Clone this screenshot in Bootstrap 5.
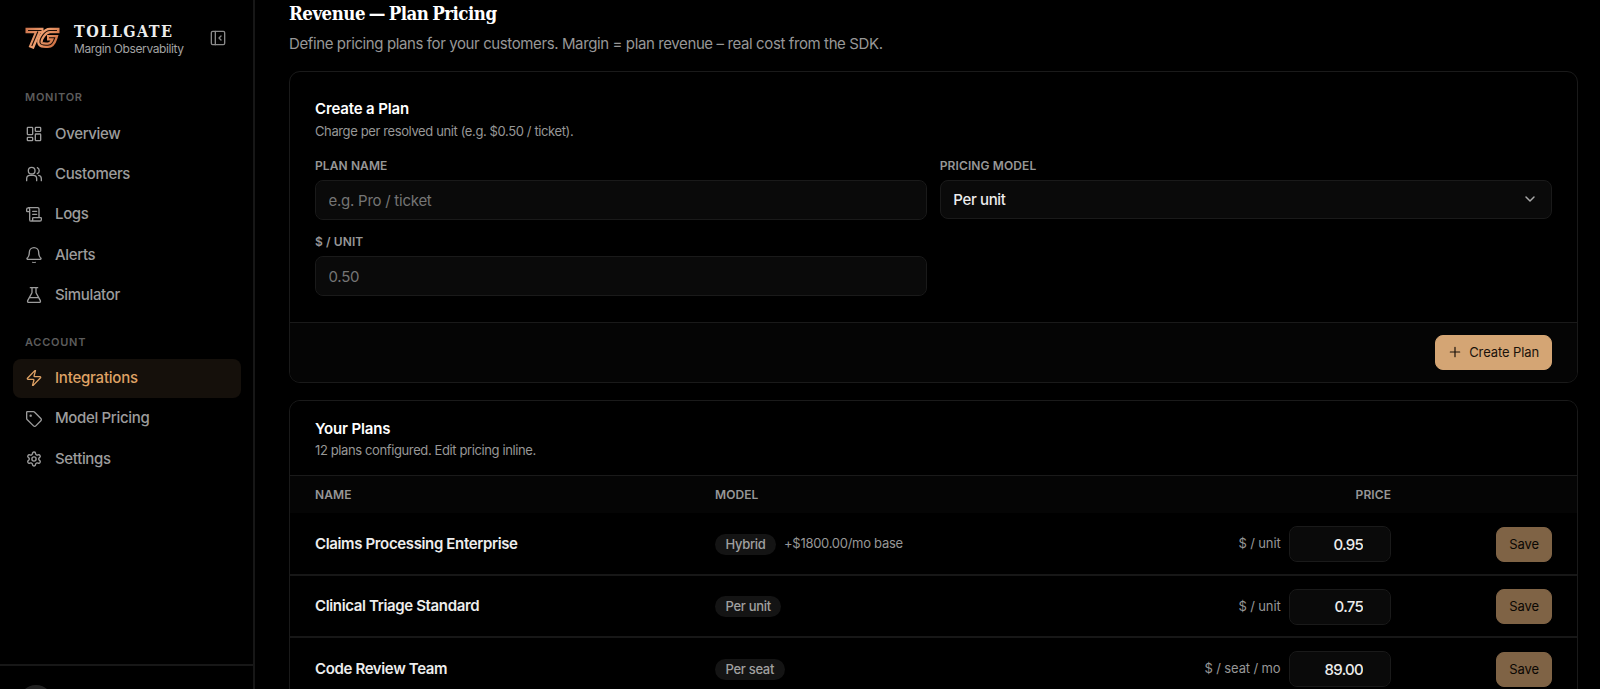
<!DOCTYPE html>
<html lang="en" data-bs-theme="dark">
<head>
<meta charset="utf-8">
<meta name="viewport" content="width=device-width, initial-scale=1">
<title>Tollgate – Plan Pricing</title>
<link href="https://cdn.jsdelivr.net/npm/bootstrap@5.3.0/dist/css/bootstrap.min.css" rel="stylesheet">
<script src="https://cdn.jsdelivr.net/npm/bootstrap@5.3.0/dist/js/bootstrap.bundle.min.js" defer></script>
<style>
:root{--line:#1a1a1a;--muted:#979797;--accent:#d4a574;--field:#0a0a0a}
body{background:#000;color:#ededed;font:15px/1.5 Inter,"Liberation Sans",sans-serif;height:100vh;overflow:hidden}
svg.ico{width:16px;height:16px;fill:none;stroke:currentColor;stroke-width:2;stroke-linecap:round;stroke-linejoin:round;flex:none}
.sidebar{width:255px;flex:none;border-right:2px solid #171717}
.brand-row{height:56px;padding:20px 27px 0 25px}
.brand-text{padding-left:14px}
.brand-name{font:700 16px/20px "DejaVu Serif Condensed","DejaVu Serif",serif;letter-spacing:1.46px;padding-top:1px}
.tagline{font-size:12px;line-height:14px;letter-spacing:-.4px;color:#a3a3a3}
.collapse-ico{color:#8a8a8a}
.side-label{font-size:11px;font-weight:600;line-height:16px;letter-spacing:.75px;color:#5c5c5c;padding-left:25px}
.side-label.first{margin-top:33px}
.side-label.next{margin-top:19.5px}
.side-nav{padding:10px 12px 0 13px;gap:2px}
.side-nav.account{padding-top:9.3px}
.side-nav .nav-link{height:38.3px;padding:0 12.5px;gap:13.5px;border-radius:8px;color:#9c9c9c;font-weight:500;letter-spacing:-.34px}
.side-nav .nav-link.active{background:#15100b;color:#dfa265;letter-spacing:-.22px}
.side-foot{height:25px;border-top:2px solid #171717;padding:19px 0 0 19px;overflow:hidden}
.avatar{width:34px;height:34px;background:#222}
.content{padding:0 22px 0 34px;min-width:0}
h1{font:700 18.5px/27px "DejaVu Serif Condensed","DejaVu Serif",serif;letter-spacing:-.5px;word-spacing:-1.5px;margin:0 0 6px}
.intro{line-height:22px;letter-spacing:-.39px;color:var(--muted);margin-bottom:16px}
.panel{--bs-card-bg:#000;--bs-card-border-color:var(--line);--bs-card-border-radius:11px;--bs-card-inner-border-radius:10px;--bs-card-cap-bg:#050505}
.panel + .panel{margin-top:17px}
.panel h2{font-size:15px;font-weight:600;letter-spacing:-.15px;line-height:24px;margin:0}
.panel .card-body{padding:25px 25px 26px}
.panel .card-footer{padding:12px 25px}
.panel .card-header{padding:16px 25px 15px;background:#000}
.panel .card-header h2{line-height:23px}
.hint{font-size:13px;line-height:20px;letter-spacing:-.385px;color:var(--muted)}
.plan-form{--bs-gutter-x:12.5px;--bs-gutter-y:12.5px;margin-top:3px}
.cap{font-size:12px;font-weight:600;line-height:18px;letter-spacing:.1px;color:var(--muted)}
label.cap{margin-bottom:5px}
.form-control,.form-select{background-color:var(--field);border-color:var(--line);border-radius:8px;font-size:15px;color:#ededed}
.field-lg{height:40.5px;padding:1px 12.5px 0;letter-spacing:-.25px}
.field-lg::placeholder{color:#757575;opacity:1}
.form-select.field-lg{height:39px;padding-top:2px;font-weight:500;letter-spacing:-.36px;background-size:16px;background-position:right 13px center;
 background-image:url("data:image/svg+xml,%3Csvg xmlns='http://www.w3.org/2000/svg' viewBox='0 0 24 24' fill='none' stroke='%23aaa' stroke-width='2.2' stroke-linecap='round' stroke-linejoin='round'%3E%3Cpath d='m6 9 6 6 6-6'/%3E%3C/svg%3E")}
.btn-gold{--bs-btn-bg:var(--accent);--bs-btn-color:#1a120a;--bs-btn-border-color:var(--accent);--bs-btn-disabled-bg:var(--accent);--bs-btn-disabled-color:#120c05;--bs-btn-disabled-border-color:var(--accent);--bs-btn-disabled-opacity:.6;--bs-btn-border-radius:8px;font-size:13px;font-weight:400;line-height:20px;height:35px;padding:0 12px 1px;letter-spacing:-.1px}
.btn-create{gap:6px;padding-left:11px}
.btn-gold svg.ico{stroke-width:1.8}
.btn-save{width:56px;padding:0 0 1px}
.plans{--bs-table-bg:transparent;--bs-table-color:#ededed;color:#ededed;table-layout:fixed}
.plans th,.plans td{border:0;padding:0 24px 0 25px;vertical-align:middle;white-space:nowrap}
.plans th:nth-child(2),.plans td:nth-child(2){padding-left:24px}
.plans td{padding-top:1px}
.plans td:last-child{padding-right:25px}
.plans thead tr{height:37px;background:#050505}
.plans tbody tr{height:62px}
.plans tbody tr+tr{border-top:2px solid #171717}
.col-name{width:401px}.col-price{width:360px}.col-save{width:162px}
.plan-title{font-weight:600;letter-spacing:-.36px}
.model-pill{background:#141414;color:#a0a0a0;font-size:13px;font-weight:500;letter-spacing:-.3px;padding:0 10.5px;line-height:21px}
.unit-text{font-size:13px;letter-spacing:-.12px;color:var(--muted)}
.base-fee{letter-spacing:-.28px}
.price-box{width:102.5px;height:36px;text-align:right;padding:0 27px 0 12px;font-weight:500;letter-spacing:-.7px}
</style>
</head>
<body class="d-flex">
<aside class="sidebar vh-100 d-flex flex-column">
  <div class="brand-row d-flex align-items-center">
    <svg width="35" height="22" viewBox="0 0 35 22" fill="none">
      <defs><linearGradient id="g" gradientUnits="userSpaceOnUse" x1="0" y1="0" x2="30" y2="22"><stop stop-color="#c9704a"/><stop offset=".5" stop-color="#f0a070"/><stop offset="1" stop-color="#c8683c"/></linearGradient></defs>
      <g stroke="url(#g)" stroke-width="5.6"><path d="M0.500 3.500H18.500M13.300 4 6.200 21"/><path d="M34.500 3.500H25C19.500 3.500 14.500 12 15 15.500C15.500 18.200 18 18.200 21 18.200H23C27 18.200 28.700 14 29.700 10.800H22"/></g>
      <g stroke="#1c0d06" stroke-width="1.100"><path d="M3 3.500H16.500M12.900 4.500 6.800 19"/><path d="M32 3.500H25C19.500 3.500 14.500 12 15 15.500C15.500 18.200 18 18.200 21 18.200H23C27 18.200 28.700 14 29.700 10.800H24"/></g>
    </svg>
    <div class="brand-text flex-grow-1 text-nowrap"><div class="brand-name">TOLLGATE</div><div class="tagline">Margin Observability</div></div>
    <svg class="ico collapse-ico" viewBox="0 0 24 24"><rect x="2" y="2" width="20" height="20" rx="2"/><path d="M8 2v20M16.500 9l-3 3 3 3"/></svg>
  </div>
  <div class="side-label first">MONITOR</div>
  <nav class="side-nav nav flex-column flex-nowrap">
    <a class="nav-link d-flex align-items-center" href="#"><svg class="ico" viewBox="0 0 24 24"><rect x="2" y="2" width="8" height="11" rx="1"/><rect x="14" y="2" width="8" height="6" rx="1"/><rect x="14" y="12" width="8" height="10" rx="1"/><rect x="2" y="17" width="8" height="5" rx="1"/></svg>Overview</a>
    <a class="nav-link d-flex align-items-center" href="#"><svg class="ico" viewBox="0 0 24 24"><path d="M16 22v-3a5 5 0 0 0-5-5H6a5 5 0 0 0-5 5v3M17 2.500a5 5 0 0 1 0 9M23 22v-3a5 5 0 0 0-4-4.800"/><circle cx="8.500" cy="7" r="5"/></svg>Customers</a>
    <a class="nav-link d-flex align-items-center" href="#"><svg class="ico" viewBox="0 0 24 24"><path d="M16 11h-6M16 6.500h-6M19.500 16V3a2 2 0 0 0-2-2H3.500M8 21h13a2 2 0 0 0 2-2v-2a1 1 0 0 0-1-1H11a1 1 0 0 0-1 1v2a2 2 0 1 1-4.500 0V3.500a2 2 0 1 0-4.500 0V6a1 1 0 0 0 1 1h3.500"/></svg>Logs</a>
    <a class="nav-link d-flex align-items-center" href="#"><svg class="ico" viewBox="0 0 24 24"><path d="M10.300 23a2 2 0 0 0 3.400 0M2.300 16.300A1 1 0 0 0 3 18.500h18a1 1 0 0 0 .7-2.200C20.400 15 19 13 19 8A7 7 0 0 0 5 8c0 5-1.400 7-2.700 8.300z"/></svg>Alerts</a>
    <a class="nav-link d-flex align-items-center" href="#"><svg class="ico" viewBox="0 0 24 24"><path d="M15 1v7a2 2 0 0 0 .25 1L21.500 20.500A1.700 1.700 0 0 1 20 23H4a1.700 1.700 0 0 1-1.500-2.500L8.750 9A2 2 0 0 0 9 8V1M6.500 1h11M6 16h12"/></svg>Simulator</a>
  </nav>
  <div class="side-label next">ACCOUNT</div>
  <nav class="side-nav account nav flex-column flex-nowrap">
    <a class="nav-link active d-flex align-items-center" href="#"><svg class="ico" viewBox="0 0 24 24"><path d="M3 14a1 1 0 0 1-.8-1.600l11-11.500a.5.5 0 0 1 .9.500l-2 7.600A1 1 0 0 0 13 10h8a1 1 0 0 1 .8 1.600l-11 11.500a.5.5 0 0 1-.9-.5l2-7.600A1 1 0 0 0 11 14z"/></svg>Integrations</a>
    <a class="nav-link d-flex align-items-center" href="#"><svg class="ico" viewBox="0 0 24 24"><path d="M12.600 1.600A2 2 0 0 0 11.200 1H2a1 1 0 0 0-1 1v9.200a2 2 0 0 0 .6 1.400l9.700 9.700a2.400 2.400 0 0 0 3.400 0l7.600-7.600a2.400 2.400 0 0 0 0-3.400z"/><circle cx="7" cy="7" r=".8" fill="currentColor"/></svg>Model Pricing</a>
    <a class="nav-link d-flex align-items-center" href="#"><svg class="ico" viewBox="0.500 0.500 23 23"><path d="M12.200 2h-.4a2 2 0 0 0-2 2v.2a2 2 0 0 1-1 1.700l-.4.300a2 2 0 0 1-2 0l-.2-.1a2 2 0 0 0-2.700.7l-.2.400a2 2 0 0 0 .7 2.700l.2.100a2 2 0 0 1 1 1.700v.5a2 2 0 0 1-1 1.800l-.2.100a2 2 0 0 0-.7 2.700l.2.400a2 2 0 0 0 2.700.7l.2-.1a2 2 0 0 1 2 0l.4.300a2 2 0 0 1 1 1.700v.2a2 2 0 0 0 2 2h.4a2 2 0 0 0 2-2v-.2a2 2 0 0 1 1-1.700l.4-.3a2 2 0 0 1 2 0l.2.100a2 2 0 0 0 2.700-.7l.2-.4a2 2 0 0 0-.7-2.700l-.2-.1a2 2 0 0 1-1-1.800v-.5a2 2 0 0 1 1-1.700l.2-.1a2 2 0 0 0 .7-2.700l-.2-.4a2 2 0 0 0-2.700-.7l-.2.100a2 2 0 0 1-2 0l-.4-.3a2 2 0 0 1-1-1.700V4a2 2 0 0 0-2-2z"/><circle cx="12" cy="12" r="3"/></svg>Settings</a>
  </nav>
  <div class="side-foot mt-auto"><div class="avatar rounded-circle"></div></div>
</aside>

<main class="content flex-grow-1">
  <h1>Revenue — Plan Pricing</h1>
  <p class="intro">Define pricing plans for your customers. Margin = plan revenue – real cost from the SDK.</p>

  <section class="card panel">
    <div class="card-body">
      <h2>Create a Plan</h2>
      <div class="hint">Charge per resolved unit (e.g. $0.50 / ticket).</div>
      <div class="row plan-form">
        <div class="col-6"><label class="cap d-block">PLAN NAME</label><input class="form-control field-lg" placeholder="e.g. Pro / ticket"></div>
        <div class="col-6"><label class="cap d-block">PRICING MODEL</label><select class="form-select field-lg"><option>Per unit</option></select></div>
        <div class="col-6"><label class="cap d-block">$ / UNIT</label><input class="form-control field-lg" placeholder="0.50"></div>
      </div>
    </div>
    <div class="card-footer d-flex justify-content-end">
      <button class="btn btn-gold btn-create d-flex align-items-center"><svg class="ico" viewBox="0 0 24 24"><path d="M5 12h14M12 5v14"/></svg>Create Plan</button>
    </div>
  </section>

  <section class="card panel">
    <div class="card-header">
      <h2>Your Plans</h2>
      <div class="hint">12 plans configured. Edit pricing inline.</div>
    </div>
    <table class="table plans mb-0">
      <colgroup><col class="col-name"><col><col class="col-price"><col class="col-save"></colgroup>
      <thead><tr><th class="cap">NAME</th><th class="cap">MODEL</th><th class="cap text-end">PRICE</th><th></th></tr></thead>
      <tbody>
        <tr><td class="plan-title">Claims Processing Enterprise</td><td><div class="d-flex align-items-center gap-2"><span class="model-pill rounded-pill">Hybrid</span><span class="unit-text base-fee">+$1800.00/mo base</span></div></td>
          <td><div class="d-flex justify-content-end align-items-center gap-2"><span class="unit-text">$ / unit</span><input class="form-control price-box" value="0.95"></div></td><td><button class="btn btn-gold btn-save ms-auto d-block" disabled>Save</button></td></tr>
        <tr><td class="plan-title">Clinical Triage Standard</td><td><div class="d-flex"><span class="model-pill rounded-pill">Per unit</span></div></td>
          <td><div class="d-flex justify-content-end align-items-center gap-2"><span class="unit-text">$ / unit</span><input class="form-control price-box" value="0.75"></div></td><td><button class="btn btn-gold btn-save ms-auto d-block" disabled>Save</button></td></tr>
        <tr><td class="plan-title">Code Review Team</td><td><div class="d-flex"><span class="model-pill rounded-pill">Per seat</span></div></td>
          <td><div class="d-flex justify-content-end align-items-center gap-2"><span class="unit-text">$ / seat / mo</span><input class="form-control price-box" value="89.00"></div></td><td><button class="btn btn-gold btn-save ms-auto d-block" disabled>Save</button></td></tr>
      </tbody>
    </table>
  </section>
</main>
</body>
</html>
